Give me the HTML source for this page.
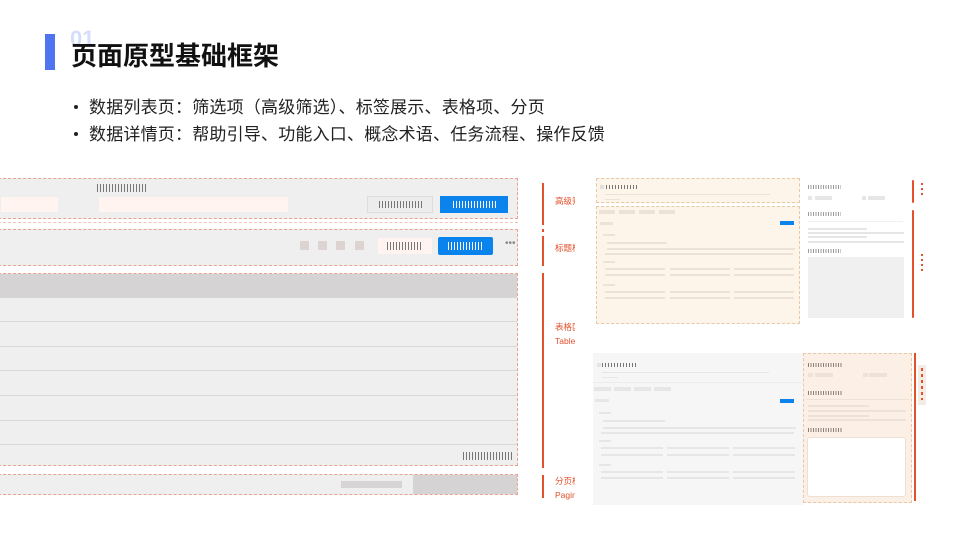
<!DOCTYPE html>
<html><head><meta charset="utf-8">
<style>
*{margin:0;padding:0;box-sizing:border-box}
body{width:960px;height:540px;background:#fff;position:relative;overflow:hidden;font-family:"Liberation Sans","Noto Sans CJK SC",sans-serif}
.a{position:absolute}
.bc{position:absolute;background:repeating-linear-gradient(90deg,#777 0 1px,transparent 1px 3px)}
.bw{position:absolute;background:repeating-linear-gradient(90deg,#fff 0 1px,transparent 1px 3px)}
.bl{position:absolute;background:repeating-linear-gradient(90deg,#999 0 1px,transparent 1px 2.5px)}
.dash{position:absolute;border:1px dashed #e8a490}
.ln{position:absolute;height:2px;background:#e6e6e6}
.ln2{position:absolute;height:2px;background:#ece2d8}
.red{position:absolute;width:2px;background:#e4502a}
.lab{position:absolute;font-size:8.5px;color:#e4502a;width:20px;overflow:hidden;white-space:nowrap;line-height:14px}
.bt{position:absolute;font-size:17px;letter-spacing:0.2px;color:#222;line-height:26px;font-family:'Noto Sans CJK SC',sans-serif;white-space:nowrap}
.dot{position:absolute;width:4px;height:4px;border-radius:2px;background:#222}
</style></head><body>
<div class="a" style="left:45px;top:34px;width:10px;height:36px;background:#4f74f0"></div>
<div class="a" style="left:70px;top:27px;font-size:22px;font-weight:bold;color:#d4ddfb;line-height:24px">01</div>
<div class="a" style="left:71px;top:38px;font-size:26px;font-weight:bold;color:#111;line-height:34px;font-family:'Noto Sans CJK SC',sans-serif">页面原型基础框架</div>
<div class="dot" style="left:74px;top:105px"></div>
<div class="bt" style="left:89px;top:93px">数据列表页：筛选项（高级筛选）、标签展示、表格项、分页</div>
<div class="dot" style="left:74px;top:132px"></div>
<div class="bt" style="left:89px;top:120px">数据详情页：帮助引导、功能入口、概念术语、任务流程、操作反馈</div>

<!-- left panel -->
<div class="dash" style="left:-2px;top:178px;width:520px;height:41px;background:#efefef"></div>
<div class="bc" style="left:97px;top:184px;width:51px;height:8px"></div>
<div class="a" style="left:0;top:196px;width:59px;height:17px;background:#fff4ef;border:1px solid #eee"></div>
<div class="a" style="left:98px;top:196px;width:191px;height:17px;background:#fff4ef;border:1px solid #eee"></div>
<div class="a" style="left:367px;top:196px;width:66px;height:17px;background:#ececec;border:1px solid #ddd"></div>
<div class="bc" style="left:379px;top:201px;width:43px;height:7px"></div>
<div class="a" style="left:440px;top:196px;width:68px;height:17px;background:#0a84ec"></div>
<div class="bw" style="left:453px;top:201px;width:43px;height:7px"></div>
<div class="dash" style="left:-2px;top:222px;width:520px;height:1px;border-width:1px 0 0;border-color:#f0c8bb"></div>
<div class="dash" style="left:-2px;top:229px;width:520px;height:37px;background:#efefef"></div>
<div class="a" style="left:300px;top:241px;width:9px;height:9px;background:#ddd3d0;border-radius:1px"></div>
<div class="a" style="left:318px;top:241px;width:9px;height:9px;background:#ddd3d0;border-radius:1px"></div>
<div class="a" style="left:336px;top:241px;width:9px;height:9px;background:#ddd3d0;border-radius:1px"></div>
<div class="a" style="left:355px;top:241px;width:9px;height:9px;background:#ddd3d0;border-radius:1px"></div>
<div class="a" style="left:377px;top:237px;width:56px;height:18px;background:#fff4ef;border:1px solid #eee"></div>
<div class="bc" style="left:387px;top:242px;width:36px;height:8px"></div>
<div class="a" style="left:438px;top:237px;width:55px;height:18px;background:#0a84ec;border-radius:2px"></div>
<div class="bw" style="left:448px;top:242px;width:36px;height:8px"></div>
<div class="a" style="left:505px;top:237px;font-size:10px;color:#888;line-height:14px">•••</div>
<div class="dash" style="left:-2px;top:273px;width:520px;height:193px;background:#efefef"></div>
<div class="a" style="left:0;top:274px;width:517px;height:24px;background:#d5d3d3"></div>
<div class="ln" style="left:0;top:321px;width:517px;height:1px;background:#d8d8d8"></div>
<div class="ln" style="left:0;top:346px;width:517px;height:1px;background:#d8d8d8"></div>
<div class="ln" style="left:0;top:370px;width:517px;height:1px;background:#d8d8d8"></div>
<div class="ln" style="left:0;top:395px;width:517px;height:1px;background:#d8d8d8"></div>
<div class="ln" style="left:0;top:420px;width:517px;height:1px;background:#d8d8d8"></div>
<div class="ln" style="left:0;top:444px;width:517px;height:1px;background:#d8d8d8"></div>
<div class="bc" style="left:463px;top:452px;width:50px;height:8px"></div>
<div class="dash" style="left:-2px;top:474px;width:520px;height:21px;background:#efefef"></div>
<div class="a" style="left:341px;top:481px;width:61px;height:7px;background:#d6d4d4"></div>
<div class="a" style="left:413px;top:475px;width:104px;height:19px;background:#d5d3d3"></div>

<!-- red labels -->
<div class="red" style="left:542px;top:183px;height:42px"></div>
<div class="red" style="left:542px;top:229px;height:3px"></div>
<div class="red" style="left:542px;top:236px;height:30px"></div>
<div class="red" style="left:542px;top:273px;height:195px"></div>
<div class="red" style="left:542px;top:475px;height:23px"></div>
<div class="lab" style="left:555px;top:194px">高级筛</div>
<div class="lab" style="left:555px;top:241px">标题栏</div>
<div class="lab" style="left:555px;top:320px">表格区<br>Table</div>
<div class="lab" style="left:555px;top:474px">分页栏<br>Pagination</div>

<!-- right top screenshot -->
<div class="a" style="left:596px;top:178px;width:204px;height:25px;background:#fdf4ea;border:1px dashed #e7c9a8"></div>
<div class="a" style="left:600px;top:185px;width:4px;height:4px;background:#e5dfda"></div>
<div class="bc" style="left:606px;top:185px;width:33px;height:4px"></div>
<div class="ln2" style="left:605px;top:194px;width:165px;height:1px"></div>
<div class="ln2" style="left:605px;top:199px;width:15px;height:1px"></div>
<div class="a" style="left:596px;top:206px;width:204px;height:118px;background:#fdf4ea;border:1px dashed #e7c9a8"></div>
<div class="ln2" style="left:599px;top:210px;width:16px;height:4px"></div>
<div class="ln2" style="left:619px;top:210px;width:16px;height:4px"></div>
<div class="ln2" style="left:639px;top:210px;width:16px;height:4px"></div>
<div class="ln2" style="left:659px;top:210px;width:16px;height:4px"></div>
<div class="ln2" style="left:600px;top:222px;width:13px;height:3px"></div>
<div class="a" style="left:780px;top:221px;width:14px;height:4px;background:#0a84ec"></div>
<div class="ln2" style="left:603px;top:234px;width:12px;height:2px"></div>
<div class="ln2" style="left:607px;top:242px;width:60px;height:2px"></div>
<div class="ln2" style="left:607px;top:248px;width:188px;height:2px"></div>
<div class="ln2" style="left:605px;top:253px;width:188px;height:2px"></div>
<div class="ln2" style="left:603px;top:261px;width:12px;height:2px"></div>
<div class="ln2" style="left:605px;top:268px;width:60px;height:2px"></div>
<div class="ln2" style="left:670px;top:268px;width:60px;height:2px"></div>
<div class="ln2" style="left:734px;top:268px;width:60px;height:2px"></div>
<div class="ln2" style="left:605px;top:274px;width:60px;height:2px"></div>
<div class="ln2" style="left:670px;top:274px;width:60px;height:2px"></div>
<div class="ln2" style="left:734px;top:274px;width:60px;height:2px"></div>
<div class="ln2" style="left:603px;top:284px;width:12px;height:2px"></div>
<div class="ln2" style="left:605px;top:291px;width:60px;height:2px"></div>
<div class="ln2" style="left:670px;top:291px;width:60px;height:2px"></div>
<div class="ln2" style="left:734px;top:291px;width:60px;height:2px"></div>
<div class="ln2" style="left:605px;top:297px;width:60px;height:2px"></div>
<div class="ln2" style="left:670px;top:297px;width:60px;height:2px"></div>
<div class="ln2" style="left:734px;top:297px;width:60px;height:2px"></div>
<!-- side panel -->
<div class="bl" style="left:808px;top:185px;width:33px;height:4px"></div>
<div class="ln" style="left:808px;top:196px;width:4px;height:4px"></div>
<div class="ln" style="left:815px;top:196px;width:17px;height:4px"></div>
<div class="ln" style="left:862px;top:196px;width:4px;height:4px"></div>
<div class="ln" style="left:868px;top:196px;width:17px;height:4px"></div>
<div class="bl" style="left:808px;top:212px;width:33px;height:4px"></div>
<div class="ln" style="left:808px;top:221px;width:95px;height:1px;background:#f1f1f1"></div>
<div class="ln" style="left:808px;top:228px;width:59px"></div>
<div class="ln" style="left:808px;top:232px;width:96px"></div>
<div class="ln" style="left:808px;top:236px;width:59px"></div>
<div class="ln" style="left:808px;top:241px;width:96px"></div>
<div class="bl" style="left:808px;top:249px;width:33px;height:4px"></div>
<div class="a" style="left:808px;top:257px;width:96px;height:61px;background:#f0f0f0"></div>
<div class="a" style="left:912px;top:180px;width:2px;height:23px;background:#e4502a;border-radius:2px"></div>
<div class="a" style="left:912px;top:210px;width:2px;height:108px;background:#e4502a;border-radius:2px"></div>
<div class="a" style="left:921px;top:183px;width:2px;height:15px;background:repeating-linear-gradient(#e4502a 0 2px,transparent 2px 5px)"></div>
<div class="a" style="left:921px;top:254px;width:2px;height:20px;background:repeating-linear-gradient(#e4502a 0 2px,transparent 2px 5px)"></div>

<!-- right bottom screenshot -->
<div class="a" style="left:593px;top:353px;width:210px;height:152px;background:#f6f6f6"></div>
<div class="a" style="left:597px;top:363px;width:4px;height:4px;background:#e5e5e5"></div>
<div class="bc" style="left:602px;top:363px;width:34px;height:4px"></div>
<div class="ln" style="left:602px;top:372px;width:167px;height:1px"></div>
<div class="ln" style="left:602px;top:377px;width:16px;height:1px"></div>
<div class="ln" style="left:593px;top:382px;width:210px;height:1px;background:#ececec"></div>
<div class="ln" style="left:594px;top:387px;width:17px;height:4px"></div>
<div class="ln" style="left:614px;top:387px;width:17px;height:4px"></div>
<div class="ln" style="left:634px;top:387px;width:17px;height:4px"></div>
<div class="ln" style="left:654px;top:387px;width:17px;height:4px"></div>
<div class="ln" style="left:595px;top:399px;width:14px;height:3px"></div>
<div class="a" style="left:780px;top:399px;width:14px;height:4px;background:#0a84ec"></div>
<div class="ln" style="left:599px;top:412px;width:12px;height:2px"></div>
<div class="ln" style="left:603px;top:420px;width:62px;height:2px"></div>
<div class="ln" style="left:603px;top:427px;width:193px;height:2px"></div>
<div class="ln" style="left:601px;top:432px;width:193px;height:2px"></div>
<div class="ln" style="left:599px;top:440px;width:12px;height:2px"></div>
<div class="ln" style="left:601px;top:447px;width:62px;height:2px"></div>
<div class="ln" style="left:667px;top:447px;width:62px;height:2px"></div>
<div class="ln" style="left:733px;top:447px;width:62px;height:2px"></div>
<div class="ln" style="left:601px;top:454px;width:62px;height:2px"></div>
<div class="ln" style="left:667px;top:454px;width:62px;height:2px"></div>
<div class="ln" style="left:733px;top:454px;width:62px;height:2px"></div>
<div class="ln" style="left:599px;top:464px;width:12px;height:2px"></div>
<div class="ln" style="left:601px;top:471px;width:62px;height:2px"></div>
<div class="ln" style="left:667px;top:471px;width:62px;height:2px"></div>
<div class="ln" style="left:733px;top:471px;width:62px;height:2px"></div>
<div class="ln" style="left:601px;top:477px;width:62px;height:2px"></div>
<div class="ln" style="left:667px;top:477px;width:62px;height:2px"></div>
<div class="ln" style="left:733px;top:477px;width:62px;height:2px"></div>
<div class="a" style="left:803px;top:353px;width:109px;height:150px;background:#fcefe6;border:1px dashed #e7c9a8"></div>
<div class="bl" style="left:808px;top:363px;width:35px;height:4px;background:repeating-linear-gradient(90deg,#8a7f7a 0 1px,transparent 1px 2.5px)"></div>
<div class="ln2" style="left:808px;top:373px;width:5px;height:4px"></div>
<div class="ln2" style="left:815px;top:373px;width:18px;height:4px"></div>
<div class="ln2" style="left:863px;top:373px;width:5px;height:4px"></div>
<div class="ln2" style="left:869px;top:373px;width:18px;height:4px"></div>
<div class="bl" style="left:808px;top:391px;width:35px;height:4px;background:repeating-linear-gradient(90deg,#8a7f7a 0 1px,transparent 1px 2.5px)"></div>
<div class="ln2" style="left:806px;top:399px;width:103px;height:1px"></div>
<div class="ln2" style="left:808px;top:405px;width:61px"></div>
<div class="ln2" style="left:808px;top:410px;width:98px"></div>
<div class="ln2" style="left:808px;top:415px;width:61px"></div>
<div class="ln2" style="left:808px;top:419px;width:98px"></div>
<div class="bl" style="left:808px;top:428px;width:35px;height:4px;background:repeating-linear-gradient(90deg,#8a7f7a 0 1px,transparent 1px 2.5px)"></div>
<div class="a" style="left:807px;top:437px;width:99px;height:60px;background:#fff;border:1px solid #eedfd3;border-radius:3px"></div>
<div class="a" style="left:914px;top:353px;width:2px;height:148px;background:#e4502a"></div>
<div class="a" style="left:918px;top:365px;width:8px;height:40px;background:#f4ebe5"></div>
<div class="a" style="left:921px;top:368px;width:2px;height:32px;background:repeating-linear-gradient(#e4502a 0 3px,transparent 3px 6px)"></div>
</body></html>
